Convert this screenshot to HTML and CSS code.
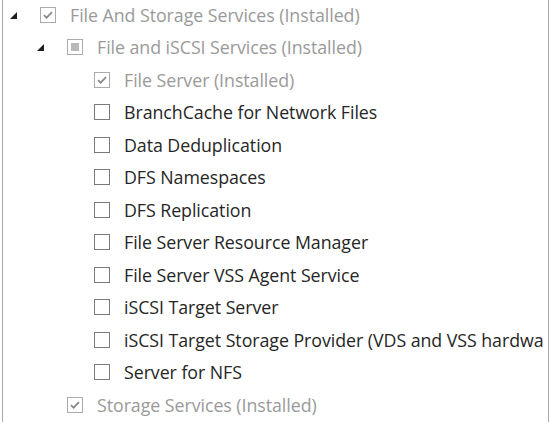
FILE: index.html
```html
<!DOCTYPE html>
<html>
<head>
<meta charset="utf-8">
<link rel="stylesheet" href="styles.css">
</head>
<body>
<div class="tree">
  <div class="row l0"><span class="exp"></span><span class="cb dim"><svg viewBox="0 0 15 15"><polyline points="3.2,7.6 6,10.4 11.8,4.4"/></svg></span><span class="label dim">File And Storage Services (Installed)</span></div>
  <div class="row l1"><span class="exp"></span><span class="cb dim partial"></span><span class="label dim">File and iSCSI Services (Installed)</span></div>
  <div class="row l2"><span class="cb dim"><svg viewBox="0 0 15 15"><polyline points="3.2,7.6 6,10.4 11.8,4.4"/></svg></span><span class="label dim">File Server (Installed)</span></div>
  <div class="row l2"><span class="cb"></span><span class="label">BranchCache for Network Files</span></div>
  <div class="row l2"><span class="cb"></span><span class="label">Data Deduplication</span></div>
  <div class="row l2"><span class="cb"></span><span class="label">DFS Namespaces</span></div>
  <div class="row l2"><span class="cb"></span><span class="label">DFS Replication</span></div>
  <div class="row l2"><span class="cb"></span><span class="label">File Server Resource Manager</span></div>
  <div class="row l2"><span class="cb"></span><span class="label">File Server VSS Agent Service</span></div>
  <div class="row l2"><span class="cb"></span><span class="label">iSCSI Target Server</span></div>
  <div class="row l2"><span class="cb"></span><span class="label">iSCSI Target Storage Provider (VDS and VSS hardwa</span></div>
  <div class="row l2"><span class="cb"></span><span class="label">Server for NFS</span></div>
  <div class="row l1 leaf"><span class="cb dim"><svg viewBox="0 0 15 15"><polyline points="3.2,7.6 6,10.4 11.8,4.4"/></svg></span><span class="label dim">Storage Services (Installed)</span></div>
</div>
</body>
</html>
```
FILE: styles.css
```css
html, body {
  margin: 0;
  padding: 0;
  background: #fff;
}
body {
  width: 550px;
  height: 429px;
  overflow: hidden;
}
.tree {
  margin-left: 2px;
  width: 545px;
  height: 422px;
  border-left: 1px solid #a8a8a8;
  border-right: 1px solid #a8a8a8;
  overflow: hidden;
  font-family: "Open Sans", "Noto Sans", sans-serif;
  font-size: 17.8px;
  letter-spacing: -0.05px;
  color: #262626;
}
.row {
  height: 32.5px;
  display: flex;
  align-items: center;
  white-space: nowrap;
}
.row:first-child {
  margin-top: -1.5px;
}
.l0 { padding-left: 7px; }
.l1 { padding-left: 34px; }
.l2 { padding-left: 91px; }
.l1.leaf { padding-left: 64px; }
.exp {
  flex: none;
  width: 7px;
  height: 7px;
  margin-right: 23px;
  margin-top: 1px;
  position: relative;
}
.exp::before {
  content: "";
  position: absolute;
  left: 0;
  top: 0;
  width: 0;
  height: 0;
  border-left: 7px solid transparent;
  border-bottom: 7px solid #1e1e1e;
}
.cb {
  flex: none;
  box-sizing: border-box;
  width: 16px;
  height: 16px;
  border: 1px solid #7a7a7a;
  background: #fff;
  margin-right: 14px;
  position: relative;
  display: flex;
}
.cb.dim {
  border-color: #ababab;
}
.cb svg {
  width: 14px;
  height: 14px;
}
.cb svg polyline {
  fill: none;
  stroke: #888888;
  stroke-width: 1.8;
}
.cb.partial::after {
  content: "";
  position: absolute;
  left: 3px;
  top: 3px;
  width: 8px;
  height: 8px;
  background: #b8b8b8;
}
.label.dim {
  color: #9a9a9a;
}
```
